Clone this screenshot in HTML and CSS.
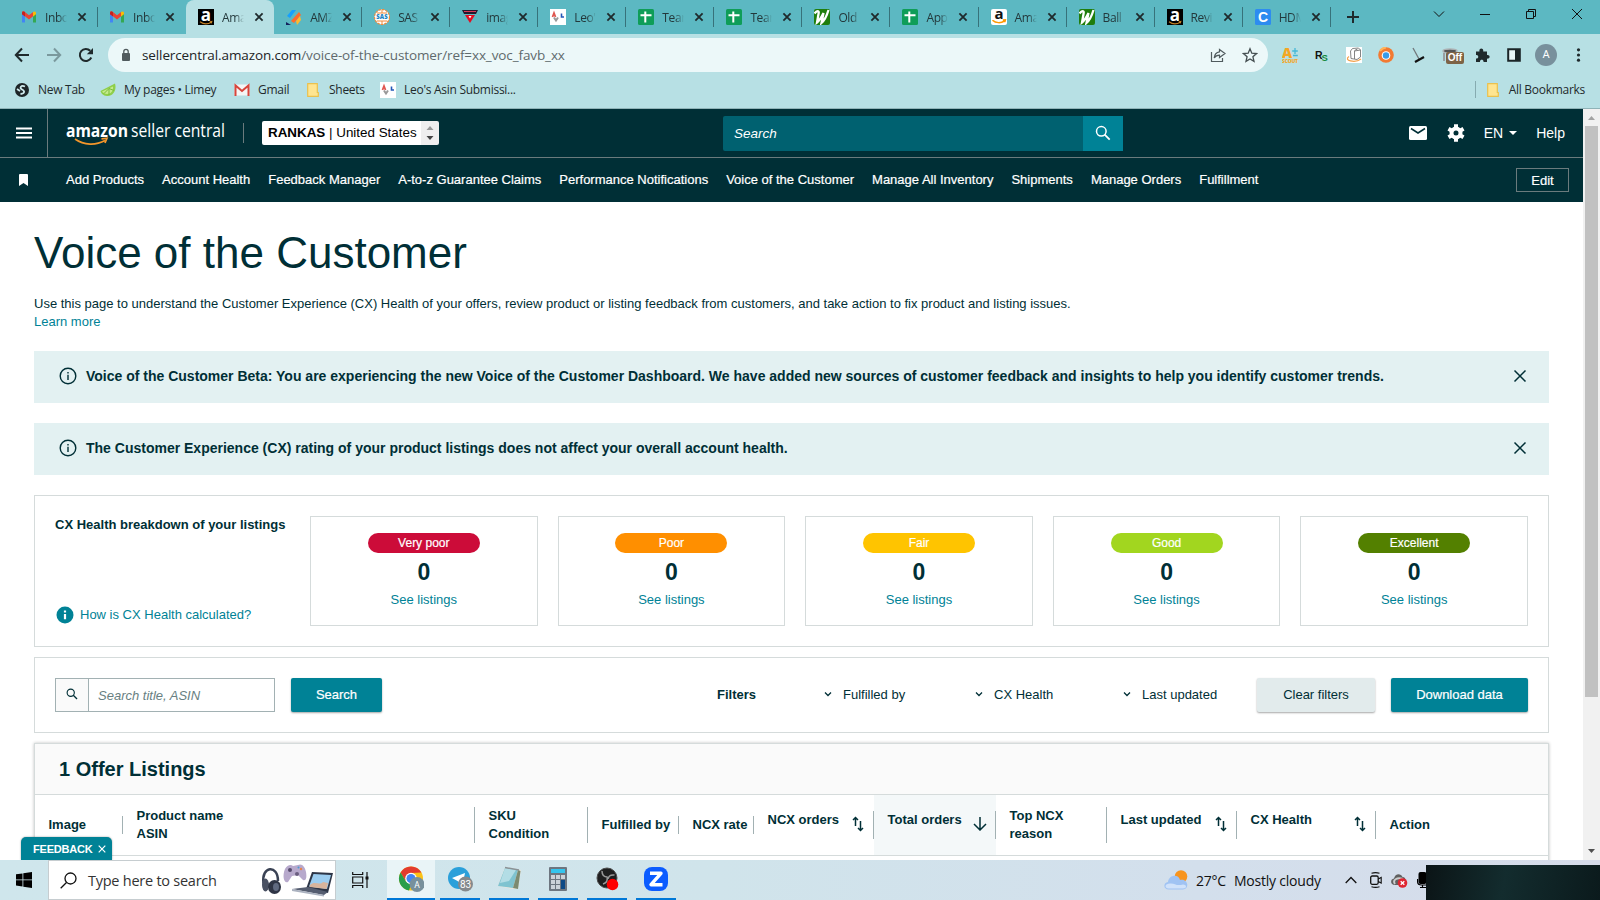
FILE: index.html
```html
<!DOCTYPE html>
<html lang="en">
<head>
  <meta charset="UTF-8" />
  <meta name="viewport" content="width=device-width, initial-scale=1.0" />
  <title>Voice of the Customer</title>
  <link rel="stylesheet" href="styles.css">
</head>
<body>
  <!-- shared icons -->
  <svg class="defs" width="0" height="0">
    <symbol id="x" viewBox="0 0 16 16"><path d="M4.4 4.4l7.2 7.2M11.6 4.4l-7.2 7.2" stroke="#1f2a2c" stroke-width="1.8" fill="none"/></symbol>
    <symbol id="gmail" viewBox="0 0 16 16">
      <path d="M1 4v9.5h3V7.5z" fill="#4285f4"/><path d="M15 4v9.5h-3V7.5z" fill="#34a853"/>
      <path d="M1 5V3.6C1 2.3 2.6 2 3.6 2.8L8 6.2l4.4-3.4V7L8 10.4 3.6 7z" fill="#ea4335"/>
      <path d="M1 4.2c0-1.8 1.6-2.2 3-1.1V7.4L1 5.2z" fill="#c5221f"/><path d="M15 4.2c0-1.8-1.6-2.2-3-1.1v4.3l3-2.2z" fill="#fbbc04"/>
    </symbol>
    <symbol id="amz-dark" viewBox="0 0 16 16">
      <rect width="16" height="16" fill="#000"/>
      <text x="8" y="11.5" font-family="Open Sans, sans-serif" font-size="17" font-weight="700" fill="#fff" text-anchor="middle">a</text>
      <path d="M2 12.8c3.5 2.5 8 2.5 11.3.4M11.8 12.7l2-.2-.6 1.9" stroke="#c58226" stroke-width="1.1" fill="none"/>
    </symbol>
    <symbol id="amz-light" viewBox="0 0 16 16">
      <rect width="16" height="16" rx="2" fill="#fff"/>
      <text x="8" y="10" font-family="Open Sans, sans-serif" font-size="15" font-weight="700" fill="#111" text-anchor="middle">a</text>
      <path d="M1.5 11.2c3.5 3.2 8.5 3 12 .8M11.8 11l2.6-.2-.6 2.3" stroke="#f90" stroke-width="1.5" fill="none"/>
    </symbol>
    <symbol id="sheet" viewBox="0 0 16 16"><rect width="16" height="16" rx="1.5" fill="#0f9d58"/><path d="M2.5 6.2h11M7.3 2.5v11" stroke="#fff" stroke-width="2"/></symbol>
    <symbol id="wform" viewBox="0 0 16 16"><rect width="16" height="16" rx="2" fill="#1f7d0c"/><path d="M.5 4.500C3 1.500 5.500 1 4.500 5L3 13.500C5 12 7.500 8 9.500 4L7.500 14C11 11 13 6 14.500 1" stroke="#fff" stroke-width="2.300" fill="none"/></symbol>
    <symbol id="leo" viewBox="0 0 16 16"><rect width="16" height="16" fill="#fff"/><path d="M2.500 8l1.500-4 1.500 4" stroke="#e0564f" stroke-width="1.800" fill="none"/><path d="M4 8.500l2 3 2-3" stroke="#999" stroke-width="2" fill="none"/><path d="M11.500 4.500v3.500h2.500" stroke="#2458b8" stroke-width="1.600" fill="none"/></symbol>
    <symbol id="folder" viewBox="0 0 16 16"><path d="M2.700 1.700h9.600v8.800h1v3.800H2.700z" fill="#ffe591" stroke="#eac14d" stroke-width="1.200"/></symbol>
    <symbol id="mag" viewBox="0 0 16 16"><circle cx="6.300" cy="6.300" r="4.800" fill="none" stroke="currentColor" stroke-width="1.500"/><path d="M9.700 9.700l5 5" stroke="currentColor" stroke-width="1.800"/></symbol>
    <symbol id="info" viewBox="0 0 18 18"><circle cx="9" cy="9" r="7.800" fill="none" stroke="#002f36" stroke-width="1.400"/><path d="M9 7.700v5.300M9 5v1.500" stroke="#002f36" stroke-width="1.400"/></symbol>
    <symbol id="close" viewBox="0 0 14 14"><path d="M1.500 1.500l11 11M12.500 1.500l-11 11" stroke="#002f36" stroke-width="1.500"/></symbol>
    <symbol id="down" viewBox="0 0 10 10"><path d="M2 3.500l3 3 3-3" stroke="#002f36" stroke-width="1.300" fill="none"/></symbol>
    <symbol id="sort" viewBox="0 0 12 16"><path d="M3.500 10V2M1 4l2.500-2.500L6 4M8.500 5v9M6 12l2.500 2.500L11 12" stroke="#002f36" stroke-width="1.500" fill="none"/></symbol>
  </svg>

  <div class="tabs">
    <div class="tab first"><svg class="fav"><use href="#gmail"/></svg><span>Inbo</span><svg class="x"><use href="#x"/></svg></div>
    <div class="tab first no-sep"><svg class="fav"><use href="#gmail"/></svg><span>Inbo</span><svg class="x"><use href="#x"/></svg></div>
    <div class="tab active"><svg class="fav"><use href="#amz-dark"/></svg><span>Ama</span><svg class="x"><use href="#x"/></svg></div>
    <div class="tab"><svg class="fav" viewBox="0 0 16 16"><path d="M1 7l5-6 4 0-6 8z" fill="#16a0ff"/><path d="M5 12l8-9 2 3-7 8z" fill="#ff6b2c"/><path d="M10 12l4-5 1 4-4 5z" fill="#ffb92e"/><path d="M0 13l5 3H0z" fill="#13205c"/></svg><span>AMZ</span><svg class="x"><use href="#x"/></svg></div>
    <div class="tab"><svg class="fav" viewBox="0 0 16 16"><circle cx="8" cy="8" r="7.500" fill="#fff" stroke="#f08a3c" stroke-width="1.200" stroke-dasharray="2.500 1"/><path d="M3 4h10M3 12h10M8 1v3M8 12v3" stroke="#f08a3c"/><text x="8" y="10.300" font-family="Open Sans, sans-serif" font-size="6" font-weight="800" fill="#1d85c5" text-anchor="middle">SAS</text></svg><span>SAS</span><svg class="x"><use href="#x"/></svg></div>
    <div class="tab"><svg class="fav" viewBox="0 0 16 16"><path d="M0 1h16l-2 4H2z" fill="#22182c"/><path d="M2 2.500h12" stroke="#d83a5a"/><path d="M3 6h10l-5 8z" fill="#e30b20"/><path d="M6.500 7h3L8 9.500z" fill="#fff"/></svg><span>imag</span><svg class="x"><use href="#x"/></svg></div>
    <div class="tab"><svg class="fav"><use href="#leo"/></svg><span>Leo'</span><svg class="x"><use href="#x"/></svg></div>
    <div class="tab"><svg class="fav"><use href="#sheet"/></svg><span>Tear</span><svg class="x"><use href="#x"/></svg></div>
    <div class="tab"><svg class="fav"><use href="#sheet"/></svg><span>Tear</span><svg class="x"><use href="#x"/></svg></div>
    <div class="tab"><svg class="fav"><use href="#wform"/></svg><span>Old</span><svg class="x"><use href="#x"/></svg></div>
    <div class="tab"><svg class="fav"><use href="#sheet"/></svg><span>App</span><svg class="x"><use href="#x"/></svg></div>
    <div class="tab"><svg class="fav"><use href="#amz-light"/></svg><span>Ama</span><svg class="x"><use href="#x"/></svg></div>
    <div class="tab"><svg class="fav"><use href="#wform"/></svg><span>Ball</span><svg class="x"><use href="#x"/></svg></div>
    <div class="tab"><svg class="fav"><use href="#amz-dark"/></svg><span>Revi</span><svg class="x"><use href="#x"/></svg></div>
    <div class="tab"><svg class="fav" viewBox="0 0 16 16"><rect width="16" height="16" rx="1.500" fill="#2d8cf0"/><text x="8" y="13" font-family="Liberation Sans, sans-serif" font-size="14" font-weight="700" fill="#fff" text-anchor="middle">C</text></svg><span>HDM</span><svg class="x"><use href="#x"/></svg></div>
    <svg class="plus" width="14" height="14" viewBox="0 0 14 14"><path d="M7 1v12M1 7h12" stroke="#1f2a2c" stroke-width="2"/></svg>
    <div class="win-buttons">
      <svg viewBox="0 0 12 12"><path d="M1 3.500l5 5 5-5" stroke="#111" fill="none"/></svg>
      <svg viewBox="0 0 12 12"><path d="M1 6.500h10" stroke="#111"/></svg>
      <svg viewBox="0 0 12 12"><path d="M1.500 3.500h7v7h-7zM3.500 3.500v-2h7v7h-2" stroke="#111" fill="none"/></svg>
      <svg viewBox="0 0 12 12"><path d="M1 1l10 10M11 1L1 11" stroke="#111" fill="none"/></svg>
    </div>
  </div>

  <div class="toolbar">
    <div class="nav-btns">
      <svg viewBox="0 0 16 16"><path d="M15 8H2M8 1.500L1.800 8 8 14.500" stroke="#1f2a2c" stroke-width="2" fill="none"/></svg>
      <svg viewBox="0 0 16 16"><path d="M1 8h13M8 1.500L14.200 8 8 14.500" stroke="#7a999d" stroke-width="2" fill="none"/></svg>
      <svg viewBox="0 0 16 16"><path d="M13.300 10.500A6 6 0 1 1 12.200 3.800" stroke="#1f2a2c" stroke-width="2" fill="none"/><path d="M15 1v6.200H8.800z" fill="#1f2a2c"/></svg>
    </div>
    <div class="omnibox">
      <svg class="lock" width="10" height="14" viewBox="0 0 10 14"><rect x="1" y="5" width="8" height="8" rx="1" fill="#505b5e"/><path d="M2.800 5V3.500a2.200 2.200 0 0 1 4.400 0V5" stroke="#505b5e" stroke-width="1.300" fill="none"/></svg>
      <span class="url">sellercentral.amazon.com<i>/voice-of-the-customer/ref=xx_voc_favb_xx</i></span>
      <svg class="share" width="16" height="16" viewBox="0 0 16 16"><path d="M1.500 5v9.500h11V11" stroke="#505b5e" stroke-width="1.200" fill="none"/><path d="M9.500 2.500L15 6.500l-5.500 4V8.200C7 8.200 5.500 9 4.200 11c.3-3.200 2-5.800 5.300-6.200z" stroke="#505b5e" stroke-width="1.200" fill="none"/></svg>
      <svg width="16" height="16" viewBox="0 0 16 16"><path d="M8 1.800l1.800 4.400 4.700.4-3.600 3.100 1.100 4.600L8 11.900l-4 2.400 1.100-4.600L1.500 6.600l4.700-.4z" stroke="#454f52" stroke-width="1.300" fill="none"/></svg>
    </div>
    <div class="extensions">
      <svg viewBox="0 0 16 16"><text x="0" y="10.500" font-family="Open Sans, sans-serif" font-size="14" font-weight="800" fill="#f5a623">A</text><path d="M13 1v6M10.200 4h5.600M11 8.500h4.800" stroke="#45b8d8" stroke-width="1.300"/><text x="0" y="15.800" font-family="Open Sans, sans-serif" font-size="5" font-weight="800" fill="#f5a623" textLength="16">SCOUT</text></svg>
      <svg viewBox="0 0 16 16"><text x="1" y="12" font-family="Liberation Sans, sans-serif" font-size="10.500" font-weight="700" fill="#111">R</text><text x="7.500" y="13.500" font-family="Liberation Sans, sans-serif" font-size="9.500" font-weight="700" fill="#12883b">S</text></svg>
      <svg viewBox="0 0 16 16"><rect width="16" height="16" fill="#fff"/><path d="M3 9.500c-6 4 6 7 12 2.500" stroke="#f3a14b" stroke-width="1.200" fill="none"/><path d="M4.500 4l2-2.500 6-.5L14.500 3v7L11 12.500 5 11.500zM8.500 3.500l3-1.500M8.500 4v8M8.500 4l6-1" stroke="#777" stroke-width=".9" fill="#fff"/></svg>
      <svg viewBox="0 0 16 16"><circle cx="8" cy="8" r="7.800" fill="#f27a32"/><path d="M2 4a8 8 0 0 1 6-3.500" stroke="#ffb45a" stroke-width="2" fill="none"/><circle cx="8" cy="8.500" r="4.300" fill="#fff"/><circle cx="8" cy="8.500" r="3.200" fill="#3a9be8"/></svg>
      <svg viewBox="0 0 16 16"><path d="M3 1l6 11" stroke="#70777a" stroke-width="1.300"/><path d="M5 15l9-5" stroke="#111" stroke-width="2.200"/></svg>
      <span class="off-ext"><svg viewBox="0 0 16 16"><ellipse cx="8" cy="4" rx="7" ry="2" fill="#555" stroke="#aeb3b5" stroke-width="1.500"/><path d="M2 6v8M14 6v5" stroke="#9a9fa2" stroke-width="2"/></svg><b>Off</b></span>
      <svg viewBox="0 0 16 16"><path d="M2 4.500h3.500c-1-4 4.500-4 3.700 0H13V8c3.500-.5 3.500 4 0 3.600V15H9.500c.5-3-4-3-3.500 0H2v-3.500c3 .5 3-4 0-3.500z" fill="#1f2a2c"/></svg>
      <svg viewBox="0 0 16 16"><path d="M2.200 2.200h11.600v11.600H2.200z" stroke="#1b2527" stroke-width="2" fill="#e8f6f7"/><path d="M9 2h5v12H9z" fill="#1b2527"/></svg>
      <span class="avatar">A</span>
      <svg viewBox="0 0 16 16" fill="#1f2a2c"><circle cx="8.500" cy="2.800" r="1.600"/><circle cx="8.500" cy="8" r="1.600"/><circle cx="8.500" cy="13.200" r="1.600"/></svg>
    </div>
  </div>

  <div class="bookmarks">
    <div class="bm w1"><svg viewBox="0 0 16 16"><circle cx="8" cy="8" r="7" fill="#1d2527"/><path d="M11 4.500C7 2.500 5 6 8 7.500s3 4-1.500 4.500M3 7l3 2" stroke="#cfe9ec" stroke-width="1.800" fill="none"/></svg><span>New Tab</span></div>
    <div class="bm w2"><svg viewBox="0 0 16 16"><path d="M15 1.500c2 7-2 13-8 12.500C3 13.800 1 11 .5 9z" fill="#8fcf4a"/><path d="M13 4.500c.6 4-2 7.500-6 7.500-2 0-4-1-5-2.500z" fill="#c5ea8e"/><path d="M9 6.500l-5 5M9 6.500V13M9 6.500l5 2" stroke="#79bd3a"/></svg><span>My pages • Limey</span></div>
    <div class="bm w3"><svg viewBox="0 0 16 16"><path d="M.5 2.500h15v11H.5z" fill="#f5f5f5"/><path d="M1.500 14V3.500L8 9l6.500-5.500V14" stroke="#d8453b" stroke-width="2" fill="none"/></svg><span>Gmail</span></div>
    <div class="bm w4"><svg><use href="#folder"/></svg><span>Sheets</span></div>
    <div class="bm w5"><svg><use href="#leo"/></svg><span>Leo's Asin Submissi...</span></div>
    <div class="bm all"><svg><use href="#folder"/></svg><span>All Bookmarks</span></div>
  </div>

  <div class="viewport">
    <div class="page">
      <header>
        <div class="top">
          <div class="burger"><svg width="16" height="12" viewBox="0 0 16 12"><path d="M0 1.500h16M0 6h16M0 10.500h16" stroke="#fff" stroke-width="1.800"/></svg></div>
          <svg class="logo" width="162" height="30" viewBox="0 0 162 30">
            <text x="0" y="15.500" font-family="Open Sans, sans-serif" font-size="17" font-weight="700" fill="#fff" textLength="62" lengthAdjust="spacingAndGlyphs">amazon</text>
            <text x="65" y="15.500" font-family="Open Sans, sans-serif" font-size="18.500" fill="#fff" textLength="94" lengthAdjust="spacingAndGlyphs">seller central</text>
            <path d="M9 18c9 6.500 21 6.500 30 1.500M35.500 17.800l5.500-.6-2 4.800" stroke="#f3962b" stroke-width="1.700" fill="none"/>
          </svg>
          <div class="select"><span class="account"><b>RANKAS</b> | United States</span><span class="spin"><svg width="8" height="14" viewBox="0 0 8 14"><path d="M4 0l3.500 4h-7z" fill="#999"/><path d="M4 14L.5 10h7z" fill="#444"/></svg></span></div>
          <div class="search"><span>Search</span><button><svg width="16" height="16"><use href="#mag"/></svg></button></div>
          <div class="tools">
            <svg width="18" height="14" viewBox="0 0 18 14"><rect width="18" height="14" rx="1.500" fill="#fff"/><path d="M2 2.500L9 7l7-4.500" stroke="#002f36" stroke-width="1.500" fill="none"/></svg>
            <svg class="gear" width="18" height="18" viewBox="0 0 18 18"><circle cx="9" cy="9" r="4.500" fill="none" stroke="#fff" stroke-width="4"/><g stroke="#fff" stroke-width="4"><path d="M9 .3v3M9 14.700v3M1.500 4.700l2.600 1.500M13.900 11.800l2.600 1.500M1.500 13.300l2.600-1.500M13.900 6.200l2.600-1.500"/></g></svg>
            <span class="lang">EN <svg width="8" height="4" viewBox="0 0 8 4"><path d="M0 0h8L4 4z" fill="#fff"/></svg></span>
            <span>Help</span>
          </div>
        </div>
        <nav>
          <svg class="flag" width="9" height="12" viewBox="0 0 9 12"><path d="M0 1q0-1 1-1h7q1 0 1 1v11L4.500 9 0 12z" fill="#fff"/></svg>
          <a>Add Products</a><a>Account Health</a><a>Feedback Manager</a><a>A-to-z Guarantee Claims</a><a>Performance Notifications</a><a>Voice of the Customer</a><a>Manage All Inventory</a><a>Shipments</a><a>Manage Orders</a><a>Fulfillment</a>
          <button class="edit">Edit</button>
        </nav>
      </header>

      <main>
        <h1>Voice of the Customer</h1>
        <p class="intro">Use this page to understand the Customer Experience (CX) Health of your offers, review product or listing feedback from customers, and take action to fix product and listing issues.<br><a>Learn more</a></p>

        <div class="alert"><svg width="18" height="18"><use href="#info"/></svg><b>Voice of the Customer Beta: You are experiencing the new Voice of the Customer Dashboard. We have added new sources of customer feedback and insights to help you identify customer trends.</b><svg class="dismiss" width="14" height="14"><use href="#close"/></svg></div>
        <div class="alert"><svg width="18" height="18"><use href="#info"/></svg><b>The Customer Experience (CX) rating of your product listings does not affect your overall account health.</b><svg class="dismiss" width="14" height="14"><use href="#close"/></svg></div>

        <section class="health">
          <div class="health-info">
            <h4>CX Health breakdown of your listings</h4>
            <a><svg width="18" height="18" viewBox="0 0 18 18"><circle cx="9" cy="9" r="8.500" fill="#008296"/><path d="M9 8v5.200M9 4.500v2" stroke="#fff" stroke-width="2.200"/></svg>How is CX Health calculated?</a>
          </div>
          <div class="card"><span class="pill very-poor">Very poor</span><strong>0</strong><a>See listings</a></div>
          <div class="card"><span class="pill poor">Poor</span><strong>0</strong><a>See listings</a></div>
          <div class="card"><span class="pill fair">Fair</span><strong>0</strong><a>See listings</a></div>
          <div class="card"><span class="pill good">Good</span><strong>0</strong><a>See listings</a></div>
          <div class="card"><span class="pill excellent">Excellent</span><strong>0</strong><a>See listings</a></div>
        </section>

        <section class="filters">
          <div class="find"><span class="find-icon"><svg width="12" height="12"><use href="#mag"/></svg></span><span class="find-text">Search title, ASIN</span></div>
          <button class="btn primary search-btn">Search</button>
          <b class="filters-label">Filters</b>
          <span class="drop d1"><svg width="10" height="10"><use href="#down"/></svg>Fulfilled by</span>
          <span class="drop d2"><svg width="10" height="10"><use href="#down"/></svg>CX Health</span>
          <span class="drop d3"><svg width="10" height="10"><use href="#down"/></svg>Last updated</span>
          <button class="btn clear">Clear filters</button>
          <button class="btn primary download">Download data</button>
        </section>

        <section class="listings">
          <h2>1 Offer Listings</h2>
          <div class="thead">
            <div class="th"><span>Image</span></div>
            <div class="th"><span>Product name<br>ASIN</span></div>
            <div class="th"><span>SKU<br>Condition</span></div>
            <div class="th"><span>Fulfilled by</span></div>
            <div class="th"><span>NCX rate</span></div>
            <div class="th sortable"><span>NCX orders<svg width="12" height="16"><use href="#sort"/></svg></span></div>
            <div class="th sortable sorted"><span>Total orders<svg width="14" height="14" viewBox="0 0 14 14"><path d="M7 0v13M1 7l6 6 6-6" stroke="#002f36" stroke-width="1.500" fill="none"/></svg></span></div>
            <div class="th"><span>Top NCX<br>reason</span></div>
            <div class="th sortable"><span>Last updated<svg width="12" height="16"><use href="#sort"/></svg></span></div>
            <div class="th sortable"><span>CX Health<svg width="12" height="16"><use href="#sort"/></svg></span></div>
            <div class="th last"><span>Action</span></div>
          </div>
        </section>
      </main>
      <div class="feedback">FEEDBACK <svg width="8" height="8" viewBox="0 0 8 8"><path d="M.7.7l6.600 6.600M7.300.7L.7 7.300" stroke="#fff" stroke-width="1.200"/></svg></div>
    </div>
    <div class="scrollbar">
      <svg width="17" height="17" viewBox="0 0 17 17"><path d="M8.500 7l3.500 4H5z" fill="#a3a3a3"/></svg>
      <div class="thumb"></div>
      <svg class="end" width="17" height="17" viewBox="0 0 17 17"><path d="M5 6h7l-3.500 4z" fill="#505050"/></svg>
    </div>
  </div>

  <div class="taskbar">
    <div class="start"><svg width="16" height="16" viewBox="0 0 16 16"><path d="M0 2.300L6.500 1.400v6.100H0zM7.300 1.300L16 0v7.500H7.300zM0 8.300h6.500v6.200L0 13.600zM7.300 8.300H16V16l-8.700-1.300z" fill="#000"/></svg></div>
    <div class="task-search">
      <svg width="17" height="17" viewBox="0 0 17 17"><circle cx="10.500" cy="6.500" r="5.500" fill="none" stroke="#111" stroke-width="1.300"/><path d="M6.500 10.500L.7 16.300" stroke="#111" stroke-width="1.300"/></svg>
      <span>Type here to search</span>
      <svg class="art" width="72" height="34" viewBox="0 0 72 34">
        <path d="M2.500 20C0 3 17 1 17 18" stroke="#3a4254" stroke-width="2.500" fill="none"/><ellipse cx="4.500" cy="22" rx="3.500" ry="6.500" fill="#4a5163"/><ellipse cx="13.500" cy="24" rx="6.500" ry="7" fill="#2f3545"/><ellipse cx="15" cy="24" rx="3" ry="4" fill="#606a80"/>
        <path d="M24 6c2-4 6-5 8-3l5-1c4-2 7 2 8 7 1 6 0 9-3 8l-5-5-6 1-4 6c-4 2-6-6-3-13z" fill="#b7a9cc"/><circle cx="29" cy="7" r="2" fill="#554a6b"/><circle cx="36" cy="11" r="2" fill="#6b5e80"/><circle cx="40" cy="6" r="1.200" fill="#e8834c"/><circle cx="37.500" cy="4.500" r="1" fill="#4a9bd0"/>
        <path d="M51 9l21 1-5 20-22-4z" fill="#2d3546"/><path d="M52.500 11l17.500 1-4 14-18-2.500z" fill="#9ccdf0"/><path d="M49 22c5-5 9 1 13-3l5 1-1.500 6-17-2z" fill="#d8b49c"/><path d="M31 26l16-2 20 5-4 3z" fill="#555d70"/><path d="M31 26l32 6v1.500L31 28z" fill="#aab1bf"/>
      </svg>
    </div>
    <div class="task-view"><svg width="17" height="16" viewBox="0 0 17 16"><path d="M.7 0v2.500h10V0M.7 16v-2.500h10V16M.7 5h10v6h-10z" stroke="#111" stroke-width="1.200" fill="none"/><path d="M15 0v16" stroke="#111" stroke-width="1.200"/><path d="M13.500 4.500h3v3h-3z" fill="#111"/></svg></div>
    <div class="app current"><svg viewBox="0 0 26 26"><circle cx="13" cy="12.500" r="12" fill="#fbc116"/><path d="M2.600 6.500A12 12 0 0 1 23.400 6.500L13 7 8 15.500z" fill="#e33b2e"/><path d="M2.600 6.500L8 15.500l5 3-2 6A12 12 0 0 1 2.600 6.500z" fill="#2a9d4a"/><circle cx="13" cy="12.500" r="5.800" fill="#fff"/><circle cx="13" cy="12.500" r="4.500" fill="#4285f4"/><circle cx="19" cy="18.500" r="7.500" fill="#78909c"/><text x="19" y="21.500" font-family="Roboto, sans-serif" font-size="8.500" fill="#fff" text-anchor="middle">A</text></svg></div>
    <div class="app"><svg viewBox="0 0 26 26"><circle cx="12" cy="12" r="11" fill="#2ba0da"/><path d="M5 12l13-5-2.500 12-5-4z" fill="#fff"/><circle cx="18.500" cy="18" r="7.500" fill="#84898c"/><text x="18.500" y="21.800" font-family="Roboto, sans-serif" font-size="10" fill="#fff" text-anchor="middle">83</text></svg></div>
    <div class="app"><svg viewBox="0 0 26 26"><path d="M9 1l16 3-3 19-6 0L2 20z" fill="#e9e6dc"/><path d="M9 2l13 2-5 18L2 20z" fill="#7fc3d0"/><path d="M9 2l11 2-7 11L4 17z" fill="#b3dde5"/><path d="M22 4l2.500 1L22 23l-5-1z" fill="#7c8a70"/><path d="M9 1.500l14 2.500" stroke="#8b9296" stroke-width="1.500"/></svg></div>
    <div class="app"><svg viewBox="0 0 26 26"><rect x="4" y="1" width="18" height="24" rx="1" fill="#6d7680"/><path d="M6 3h14v4H6z" fill="#35c5ee"/><g fill="#ccd2d8"><path d="M6 9h4v4H6zM11 9h4v4h-4zM16 9h4v4h-4zM6 14h4v4H6zM11 14h4v4h-4zM6 19h4v4H6zM11 19h4v4h-4z"/></g><path d="M16 14h4v9h-4z" fill="#0d4a86"/></svg></div>
    <div class="app"><svg viewBox="0 0 26 26"><circle cx="13" cy="12" r="10" fill="#1f1f20" stroke="#4d4d4d"/><path d="M8 5c0 5 3 6 5.500 6M20.500 9c-4-.5-6 1-6.500 4M9 18c3-1 5-3.500 4-7" stroke="#999" stroke-width="1.500" fill="none"/><circle cx="18.500" cy="18.500" r="5.800" fill="#f00"/></svg></div>
    <div class="app"><svg viewBox="0 0 26 26"><rect x="1" y="1" width="24" height="24" rx="8" fill="#0b5cff"/><path d="M7 7.300h11L8 18.700h11.500" stroke="#fff" stroke-width="3.400" fill="none" stroke-linejoin="round"/></svg></div>
    <div class="weather">
      <svg width="24" height="20" viewBox="0 0 24 20"><circle cx="17" cy="6.500" r="6.300" fill="#f7941e"/><path d="M5 19.500c-6 0-6-7-1-7.500C5 4 15 4 16 10c8-2 10 9 3 9.500z" fill="#a0c3f3"/><path d="M4 18.500c-4-1-3-5 2-5 5-.5 6 3 13 1 4 0 4 4 0 4z" fill="#d0e2fa"/></svg>
      <span class="temp">27°C</span><span class="sky">Mostly cloudy</span>
    </div>
    <div class="tray">
      <svg width="12" height="8" viewBox="0 0 12 8"><path d="M.7 7L6 1.500 11.300 7" stroke="#111" stroke-width="1.300" fill="none"/></svg>
      <svg width="12" height="16" viewBox="0 0 12 16"><rect x=".7" y="4" width="7.500" height="8.300" rx="1.500" stroke="#111" stroke-width="1.300" fill="none"/><path d="M8.200 7l3-1.500v5.500l-3-1.500M1.500 1.300q4-1.300 8 0M1.500 14.800q4 1.200 8 0" stroke="#111" stroke-width="1.100" fill="none"/></svg>
      <svg width="17" height="15" viewBox="0 0 17 15"><path d="M4 12c-5 0-5-6-1-6.500C4 0 10 0 11.500 4c4 0 4 6 2 8z" fill="#606060"/><path d="M4 11c-3-4 2-7 8-5" stroke="#ccc" stroke-width="2" fill="none"/><circle cx="11.500" cy="10" r="4.800" fill="#df2531"/><path d="M9.700 8.200l3.600 3.600M13.300 8.200l-3.600 3.600" stroke="#fff" stroke-width="1.300"/></svg>
      <svg width="10" height="16" viewBox="0 0 10 16"><rect x="1.500" y="0" width="8" height="12" rx="2" fill="#000"/><path d="M.6 7v3q0 3 4 3h5M5.500 13v2.500M3 15.500h6" stroke="#000" stroke-width="1.200" fill="none"/></svg>
    </div>
    <div class="overlay"></div>
  </div>
</body>
</html>
```
FILE: styles.css
```css
* {
  box-sizing: border-box;
}

body {
  margin: 0;
  width: 1600px;
  height: 900px;
  overflow: hidden;
  display: flex;
  flex-direction: column;
  font-family: "Liberation Sans", Arial, sans-serif;
  font-size: 13px;
  color: #002f36;
  background: #fff;
}

svg {
  display: block;
  flex: none;
}

.defs {
  position: absolute;
}

button {
  font: inherit;
  border: 0;
  padding: 0;
}

/* browser tabs */
.tabs {
  height: 34px;
  background: #5cb8c2;
  display: flex;
  align-items: center;
  padding-left: 10px;
  font-family: "Open Sans", sans-serif;
  font-size: 12px;
  color: #23383b;
  flex: none;
}

.tab {
  width: 88.06px;
  height: 34px;
  display: flex;
  align-items: center;
  padding-left: 12px;
  position: relative;
  flex: none;
}

.tab.first {
  padding-left: 11px;
}

.tab::after {
  content: "";
  position: absolute;
  right: 0;
  top: 7px;
  width: 1px;
  height: 20px;
  background: #37727a;
}

.tab.no-sep::after,
.tab.active::after {
  display: none;
}

.tab.active {
  background: #b7e0e4;
  border-radius: 8px 8px 0 0;
}

.fav {
  width: 16px;
  height: 16px;
}

.tab span {
  width: 24px;
  margin-left: 7px;
  padding-left: 1px;
  overflow: hidden;
  white-space: nowrap;
  letter-spacing: -0.4px;
  -webkit-mask-image: linear-gradient(to right, #000 60%, transparent 96%);
  mask-image: linear-gradient(to right, #000 60%, transparent 96%);
}

.tab .x {
  width: 16px;
  height: 16px;
  margin-left: 6px;
}

.plus {
  margin-left: 15px;
}

.win-buttons {
  display: flex;
  gap: 34px;
  margin: -6px 17px 0 auto;
}

.win-buttons svg {
  width: 12px;
  height: 12px;
}

/* address bar */
.toolbar {
  height: 40px;
  background: #b7e0e4;
  display: flex;
  align-items: center;
  flex: none;
}

.nav-btns {
  display: flex;
  gap: 16px;
  padding: 2px 0 0 14px;
  width: 108px;
}

.nav-btns svg {
  width: 16px;
  height: 16px;
}

.omnibox {
  width: 1160px;
  height: 34px;
  margin-top: 2px;
  border-radius: 17px;
  background: #ecf8f9;
  display: flex;
  align-items: center;
  padding: 0 10px 0 13px;
}

.url {
  margin-left: 11px;
  font-family: "Open Sans", sans-serif;
  font-size: 13.5px;
  letter-spacing: -0.11px;
  color: #1c2426;
  white-space: nowrap;
}

.url i {
  font-style: normal;
  color: #5f6a6d;
}

.share {
  margin: 0 16px 0 auto;
}

.extensions {
  display: flex;
  margin: 2px 0 0 6px;
}

.extensions > * {
  width: 16px;
  height: 16px;
  margin: 0 8px;
  flex: none;
}

.off-ext {
  position: relative;
}

.off-ext svg {
  width: 16px;
  height: 16px;
}

.off-ext b {
  position: absolute;
  left: 4px;
  top: 5px;
  width: 18px;
  height: 12px;
  border-radius: 2px;
  background: #7d6346;
  color: #fff;
  font-size: 10px;
  line-height: 12px;
  text-align: center;
}

.extensions .avatar {
  width: 22px;
  height: 22px;
  margin: -3px 5px;
  border-radius: 50%;
  background: #78909c;
  color: #fff;
  font: 11px/22px Roboto, sans-serif;
  text-align: center;
}

/* bookmarks bar */
.bookmarks {
  height: 35px;
  background: #b7e0e4;
  border-bottom: 1px solid #8fb3b7;
  display: flex;
  align-items: center;
  padding: 0 15px 3px 14px;
  font-family: "Open Sans", sans-serif;
  font-size: 12px;
  letter-spacing: -0.28px;
  color: #1f2a2c;
  flex: none;
}

.bm {
  display: flex;
  align-items: center;
  gap: 8px;
  white-space: nowrap;
}

.bm svg {
  width: 16px;
  height: 16px;
}

.bm.w1 { width: 86px; }
.bm.w2 { width: 134px; }
.bm.w3 { width: 71px; }
.bm.w4 { width: 75px; }

.bm.all {
  margin-left: auto;
  border-left: 1px solid #86abb0;
  padding-left: 9px;
}

/* web page */
.viewport {
  height: 751px;
  display: flex;
  flex: none;
}

.page {
  width: 1583px;
  overflow: hidden;
  position: relative;
}

header {
  background: #002f36;
  color: #fff;
  height: 93px;
}

.top {
  height: 49px;
  border-bottom: 1px solid #6a7b7d;
  display: flex;
  align-items: center;
}

.burger {
  width: 48px;
  height: 48px;
  border-right: 1px solid #6a7b7d;
  display: flex;
  align-items: center;
  padding-left: 16px;
}

.logo {
  margin: 5px 0 0 18px;
}

.select {
  margin-left: 15px;
  padding-left: 19px;
  width: 196px;
  display: flex;
  position: relative;
}

.select::before {
  content: "";
  position: absolute;
  left: 0;
  top: 2px;
  height: 20px;
  width: 1px;
  background: #6a7b7d;
}

.account {
  flex: 1;
  height: 24px;
  line-height: 24px;
  background: #fff;
  color: #000;
  border-radius: 2px 0 0 2px;
  padding-left: 6px;
  font-size: 13.4px;
  white-space: nowrap;
}

.spin {
  width: 18px;
  background: #efefef;
  border-radius: 0 2px 2px 0;
  display: flex;
  align-items: center;
  justify-content: center;
}

.search {
  margin-left: 284px;
  width: 400px;
  height: 35px;
  display: flex;
  background: #006170;
  font-size: 13.5px;
  font-style: italic;
  line-height: 35px;
  border-radius: 2px;
}

.search span {
  flex: 1;
  padding-left: 11px;
}

.search button {
  width: 40px;
  background: #008296;
  color: #fff;
  display: flex;
  align-items: center;
  justify-content: center;
}

.tools {
  display: flex;
  align-items: center;
  margin: 0 18px 0 auto;
  font-size: 14px;
}

.gear {
  margin: 0 19px 0 20px;
}

.lang {
  display: flex;
  align-items: center;
  gap: 6px;
  margin-right: 19px;
}

nav {
  height: 44px;
  display: flex;
  align-items: center;
  gap: 18px;
  padding-bottom: 1px;
  -webkit-text-stroke: 0.2px #fff;
}

.flag {
  margin: 1px 19px 0 19px;
}

.flag + a {
  margin-left: 1px;
}

.edit {
  margin: 1px 14px 0 auto;
  width: 53px;
  height: 24px;
  line-height: 21px;
  border: 1px solid #6a7b7d;
  background: none;
  color: #fff;
}

main {
  padding: 0 34px;
}

a {
  color: #008296;
}

nav a {
  color: #fff;
}

h1 {
  font-size: 44px;
  font-weight: 400;
  line-height: 50px;
  margin: 26px 0 0;
}

.intro {
  margin: 17px 0 0;
  line-height: 18px;
  white-space: nowrap;
}

.alert {
  height: 52px;
  margin-top: 20px;
  background: #e3f1f2;
  display: flex;
  align-items: center;
  padding: 0 22px 3px 25px;
  font-size: 14px;
  white-space: nowrap;
}

.alert b {
  margin-left: 9px;
}

.dismiss {
  margin-left: auto;
}

.health {
  height: 152px;
  margin-top: 20px;
  border: 1px solid #d5dbdb;
  padding: 20px;
  display: flex;
  gap: 20px;
}

.health-info {
  width: 235px;
  display: flex;
  flex-direction: column;
  justify-content: space-between;
  white-space: nowrap;
}

.health-info h4 {
  margin: 0;
  font-size: 13px;
  line-height: 18px;
}

.health-info a {
  display: flex;
  align-items: center;
  gap: 6px;
  padding-left: 1px;
  margin-bottom: 2px;
  line-height: 16px;
  height: 18px;
}

.card {
  flex: 1;
  height: 110px;
  border: 1px solid #d5dbdb;
  display: flex;
  flex-direction: column;
  align-items: center;
  padding-top: 16px;
}

.pill {
  width: 112px;
  height: 20px;
  border-radius: 10px;
  color: #fff;
  font-size: 12px;
  line-height: 20px;
  text-align: center;
  -webkit-text-stroke: 0.2px #fff;
}

.very-poor { background: #cc0c39; }
.poor { background: #ff8f00; }
.fair { background: #ffc400; }
.good { background: #a2d61f; }
.excellent { background: #538000; }

.card strong {
  font-size: 23px;
  line-height: 28px;
  margin: 5px 0;
}

.card a {
  line-height: 18px;
}

.filters {
  height: 76px;
  margin-top: 10px;
  border: 1px solid #d5dbdb;
  padding: 0 20px;
  display: flex;
  align-items: center;
  white-space: nowrap;
}

.find {
  width: 220px;
  height: 34px;
  border: 1px solid #a2b1b3;
  display: flex;
  line-height: 33px;
  font-style: italic;
  color: #687f82;
}

.find-icon {
  width: 33px;
  padding-bottom: 2px;
  background: #fafafa;
  border-right: 1px solid #a2b1b3;
  display: flex;
  align-items: center;
  justify-content: center;
  color: #002f36;
}

.find-text {
  padding-left: 9px;
}

.btn {
  height: 34px;
  line-height: 32px;
  border-radius: 2px;
  box-shadow: 0 1px 2px rgba(0, 0, 0, 0.35);
  background: #e2ebec;
  color: #002f36;
}

.btn.primary {
  background: #008296;
  color: #fff;
  -webkit-text-stroke: 0.2px #fff;
}

.search-btn {
  width: 91px;
  margin-left: 16px;
}

.filters-label {
  margin-left: 335px;
  width: 106px;
  padding-bottom: 2px;
}

.drop {
  display: flex;
  align-items: center;
  gap: 10px;
  padding-bottom: 2px;
}

.d1 { width: 151px; }
.d2 { width: 148px; }

.clear {
  width: 118px;
  margin-left: auto;
}

.download {
  width: 137px;
  margin-left: 16px;
}

.listings {
  height: 130px;
  margin-top: 10px;
  border: 1px solid #d5dbdb;
  box-shadow: 0 0 3px rgba(0, 0, 0, 0.25);
}

.listings h2 {
  margin: 0;
  height: 51px;
  line-height: 50px;
  padding-left: 24px;
  font-size: 20px;
  background: #fafafa;
  border-bottom: 1px solid #d5dbdb;
}

.thead {
  height: 61px;
  display: grid;
  grid-template-columns: 88px 352px 113px 91px 75px 120px 122px 111px 130px 139px 1fr;
  border-bottom: 1px solid #d5dbdb;
  font-weight: 700;
  line-height: 18px;
  white-space: nowrap;
}

.th {
  display: flex;
  align-items: center;
}

.th span {
  flex: 1;
  padding-left: 13.5px;
  border-right: 1px solid #a2b1b3;
}

.th.last span {
  border: 0;
}

.sortable span {
  height: 28px;
  display: flex;
  justify-content: space-between;
  padding-right: 9px;
}

.sortable svg {
  align-self: center;
  margin-top: -2px;
}

.sorted {
  background: #f4f8f9;
}

.sorted span {
  padding-right: 8px;
}

.feedback {
  position: absolute;
  left: 21px;
  bottom: 0;
  width: 91px;
  height: 23px;
  background: #008296;
  color: #fff;
  border-radius: 5px 5px 0 0;
  font-size: 11px;
  font-weight: 700;
  display: flex;
  align-items: center;
  gap: 5px;
  padding-left: 12px;
  letter-spacing: -0.2px;
  box-shadow: 0 0 2px rgba(0, 0, 0, 0.4);
}

.scrollbar {
  width: 17px;
  background: #f1f1f1;
  display: flex;
  flex-direction: column;
}

.thumb {
  height: 571px;
  margin: 0 2px;
  background: #c1c1c1;
}

.end {
  margin-top: auto;
}

/* windows taskbar */
.taskbar {
  height: 40px;
  background: linear-gradient(to right, #cfe6ec, #d0e4eb 45%, #d3dfec 75%, #d6dcea);
  display: flex;
  position: relative;
  font-family: "Open Sans", sans-serif;
  color: #111;
  flex: none;
}

.start {
  width: 48px;
  padding: 12px 16px;
}

.task-search {
  width: 288px;
  background: #fff;
  border: 1px solid #c6cdd0;
  display: flex;
  align-items: center;
  padding: 0 2px 0 11px;
  font-size: 14.5px;
  letter-spacing: -0.25px;
  color: #333;
}

.task-search span {
  margin-left: 11px;
  white-space: nowrap;
}

.art {
  margin-left: auto;
}

.task-view {
  width: 51px;
  padding: 12px 16px;
}

.app {
  width: 40px;
  margin-right: 9px;
  border-bottom: 2px solid #0078d7;
  display: flex;
  align-items: center;
  justify-content: center;
}

.app svg {
  width: 26px;
  height: 26px;
}

.app.current {
  width: 48px;
  margin-right: 5px;
  background: #e9f4f7;
}

.weather {
  display: flex;
  align-items: center;
  margin-left: 479px;
  width: 181px;
  font-size: 14px;
  letter-spacing: -0.22px;
  white-space: nowrap;
}

.temp {
  margin-left: 8px;
  width: 38px;
}

.tray {
  display: flex;
  align-items: center;
  gap: 9px;
}

.tray svg:first-child {
  margin-right: 4px;
}

.overlay {
  position: absolute;
  left: 1426px;
  right: 0;
  top: 5px;
  bottom: 0;
  background: linear-gradient(100deg, #0b1416, #132c2e 45%, #0b1a1c);
}
```
